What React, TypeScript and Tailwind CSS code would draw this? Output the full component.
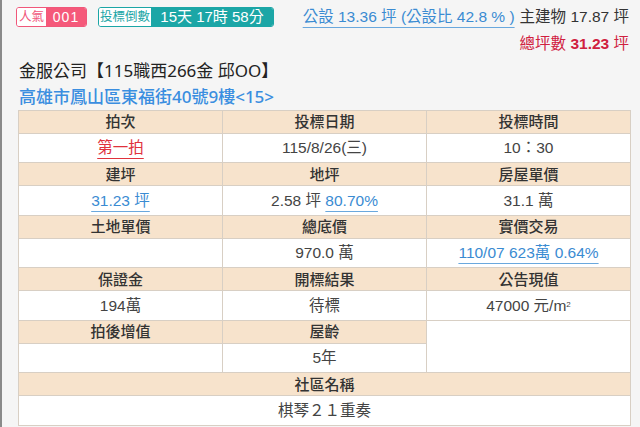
import React from "react";

const head = "h-[23px] bg-[#f7e3cc] border border-[#d8cfc4] text-center text-[15px] font-medium text-[#333] leading-none";
const val = "h-[29.6px] bg-white border border-[#d8cfc4] text-center text-[15.5px] text-[#444] leading-none";
const link = "text-[#3a8bd2] underline underline-offset-[5px] decoration-[#6aa8dd]";

export default function App() {
  return (
    <div
      className="w-[640px] h-[427px] overflow-hidden bg-[#f5f5f5] border-l-2 border-[#8a8a8a]"
      style={{ fontFamily: '"Liberation Sans", "Noto Sans CJK TC", sans-serif' }}
    >
      <div className="pl-[14px] pr-[11px]">
        {/* Top bar */}
        <div className="flex justify-between pt-[7px]">
          <div className="flex items-start gap-[11px]">
            <div className="flex h-[20px] rounded-[3px] border border-[#f0577a] overflow-hidden">
              <span className="w-[29px] flex items-center justify-center bg-white text-[12.5px] text-[#f0577a]">人氣</span>
              <span className="w-[40px] flex items-center justify-center bg-[#f5597a] text-[14px] text-white tracking-[1px]">001</span>
            </div>
            <div className="flex h-[20px] rounded-[3px] border border-[#1ba6a6] overflow-hidden">
              <span className="w-[52px] flex items-center justify-center bg-white text-[12.5px] text-[#1ba6a6]">投標倒數</span>
              <span className="w-[122px] flex items-center justify-center bg-[#1ba6a6] text-[15px] text-white">15天 17時 58分</span>
            </div>
          </div>
          <div className="flex flex-col items-end text-[15.5px] leading-none pt-[2px]">
            <div className="flex gap-[5px] h-[18px]">
              <span className={link}>公設 13.36 坪 (公設比 42.8 % )</span>
              <span className="text-[#333]">主建物 17.87 坪</span>
            </div>
            <div className="mt-[9px] text-[#d0203f]">
              總坪數 <span className="font-bold">31.23</span> 坪
            </div>
          </div>
        </div>

        {/* Title */}
        <div
          className="mt-[6px] pl-[3px] text-[17px] leading-[26px] text-[#222]"
          style={{ fontFamily: '"Noto Sans", "Noto Sans CJK TC", sans-serif' }}
        >
          <div>金服公司【115職西266金 邱OO】</div>
          <div className="text-[#3a8ee0] font-medium">高雄市鳳山區東福街40號9樓&lt;15&gt;</div>
        </div>

        {/* Table */}
        <table className="ml-[2px] w-[613px] border-collapse border border-[#b8b3ad] table-fixed">
          <tbody>
            <tr>
              <td className={head}>拍次</td>
              <td className={head}>投標日期</td>
              <td className={head}>投標時間</td>
            </tr>
            <tr>
              <td className={val}>
                <span className="text-[#e0323c] underline underline-offset-[5px] decoration-[#e0323c]">第一拍</span>
              </td>
              <td className={val + " text-[#333]"}>115/8/26(三)</td>
              <td className={val + " text-[#333]"}>10：30</td>
            </tr>
            <tr>
              <td className={head}>建坪</td>
              <td className={head}>地坪</td>
              <td className={head}>房屋單價</td>
            </tr>
            <tr>
              <td className={val}>
                <span className={link}>31.23 坪</span>
              </td>
              <td className={val + " text-[#333]"}>
                2.58 坪 <span className={link}>80.70%</span>
              </td>
              <td className={val + " text-[#333]"}>31.1 萬</td>
            </tr>
            <tr>
              <td className={head}>土地單價</td>
              <td className={head}>總底價</td>
              <td className={head}>實價交易</td>
            </tr>
            <tr>
              <td className={val}></td>
              <td className={val + " text-[#333]"}>970.0 萬</td>
              <td className={val}>
                <span className={link}>110/07 623萬 0.64%</span>
              </td>
            </tr>
            <tr>
              <td className={head}>保證金</td>
              <td className={head}>開標結果</td>
              <td className={head}>公告現值</td>
            </tr>
            <tr>
              <td className={val}>194萬</td>
              <td className={val}>待標</td>
              <td className={val + " text-[#333]"}>
                47000 元/m<sup className="text-[8px]">2</sup>
              </td>
            </tr>
            <tr>
              <td className={head}>拍後增值</td>
              <td className={head}>屋齡</td>
              <td rowSpan={2} className="bg-white border border-[#d8cfc4]"></td>
            </tr>
            <tr>
              <td className={val}></td>
              <td className={val}>5年</td>
            </tr>
            <tr>
              <td colSpan={3} className={head}>社區名稱</td>
            </tr>
            <tr>
              <td colSpan={3} className={val}>棋琴２１重奏</td>
            </tr>
          </tbody>
        </table>
      </div>
    </div>
  );
}
